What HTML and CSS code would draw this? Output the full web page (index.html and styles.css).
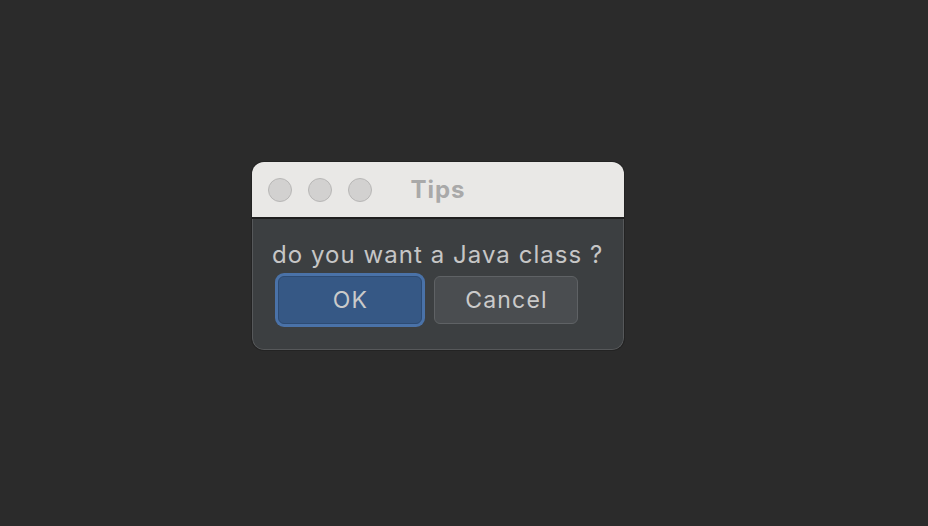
FILE: index.html
```html
<!DOCTYPE html>
<html>
<head>
<meta charset="utf-8">
<link rel="stylesheet" href="styles.css">
</head>
<body>
<div class="stage">
  <div class="window">
    <div class="titlebar">
      <div class="lights">
        <span class="light"></span>
        <span class="light"></span>
        <span class="light"></span>
      </div>
      <div class="title">Tips</div>
    </div>
    <div class="content">
      <div class="message">do you want a Java class ?</div>
      <div class="buttons">
        <button class="btn btn-primary">OK</button>
        <button class="btn">Cancel</button>
      </div>
    </div>
  </div>
</div>
</body>
</html>
```
FILE: styles.css
```css
html, body {
  margin: 0;
  padding: 0;
}
body {
  background: #2b2b2b;
  width: 928px;
  height: 526px;
  overflow: hidden;
  font-family: Inter, "Liberation Sans", sans-serif;
}
.stage {
  padding: 162px 0 0 252px;
}
.window {
  width: 372px;
  height: 188px;
  border-radius: 12px;
  overflow: hidden;
  display: flex;
  flex-direction: column;
  box-shadow: 0 0 0 1px #232323;
}
.titlebar {
  position: relative;
  height: 55px;
  background: #e9e8e6;
  border-bottom: 2px solid #1f1f1f;
  display: flex;
  align-items: center;
  justify-content: center;
  flex-shrink: 0;
}
.lights {
  position: absolute;
  left: 16px;
  top: 16px;
  display: flex;
  gap: 16px;
}
.light {
  width: 22px;
  height: 22px;
  border-radius: 50%;
  background: #d2d1d0;
  border: 1px solid #b8b7b6;
}
.title {
  font-size: 24px;
  font-weight: 700;
  color: #a9a9a9;
  letter-spacing: 1px;
  padding-top: 0;
}
.content {
  flex: 1;
  background: #3c3f41;
  border: 1px solid #56585a;
  border-top: none;
  border-radius: 0 0 12px 12px;
  padding: 22px 0 0 19px;
}
.message {
  font-size: 24px;
  color: #c6c6c6;
  line-height: 28px;
  letter-spacing: 1.05px;
}
.buttons {
  display: flex;
  gap: 12px;
  margin-top: 7px;
  padding-left: 6px;
}
.btn {
  width: 144px;
  height: 48px;
  border-radius: 6px;
  background: #4a4d50;
  border: 1px solid #5f6265;
  color: #cacaca;
  font-family: Inter, "Liberation Sans", sans-serif;
  font-size: 23px;
  letter-spacing: 1.2px;
  padding: 0 0 0 1px;
}
.btn-primary {
  background: #365885;
  border: 1px solid #2d4b73;
  box-shadow: 0 0 0 3px #4a72a8;
}
```
